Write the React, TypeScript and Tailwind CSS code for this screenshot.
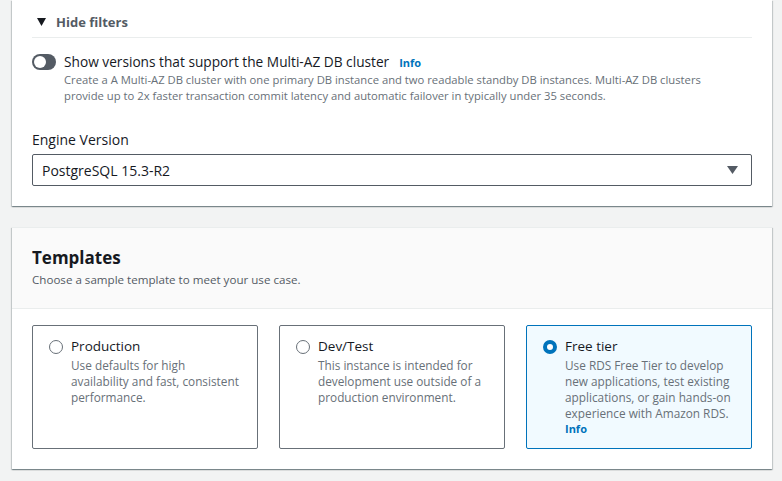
import React, { useState } from "react";

const font = { fontFamily: '"Open Sans", "Noto Sans", sans-serif' };

type Tpl = { id: string; title: string; desc: string; info?: boolean };

const templates: Tpl[] = [
  { id: "prod", title: "Production", desc: "Use defaults for high availability and fast, consistent performance." },
  { id: "dev", title: "Dev/Test", desc: "This instance is intended for development use outside of a production environment." },
  {
    id: "free",
    title: "Free tier",
    desc: "Use RDS Free Tier to develop new applications, test existing applications, or gain hands-on experience with Amazon RDS.",
    info: true,
  },
];

function Radio({ checked }: { checked: boolean }) {
  if (checked) {
    return <span className="mt-[5px] w-[14px] h-[14px] shrink-0 rounded-full border-[4px] border-[#0073bb] bg-white" />;
  }
  return <span className="mt-[5px] w-[14px] h-[14px] shrink-0 rounded-full border-[1.5px] border-[#687078] bg-white" />;
}

export default function App() {
  const [selected, setSelected] = useState("free");

  return (
    <div className="w-[782px] h-[481px] overflow-hidden bg-[#f2f3f3] text-[#16191f] pl-[12px] pr-[10px]" style={font}>
      {/* Engine options panel (top cut off) */}
      <section className="bg-white shadow-[0_1px_1px_0_rgba(0,28,36,0.3),1px_1px_1px_0_rgba(0,28,36,0.15),-1px_1px_1px_0_rgba(0,28,36,0.15)] px-[20px] pb-[20px]">
        <div className="h-[38px] flex items-start gap-[10px] border-b border-[#eaeded] pl-[5px] pt-[12px]">
          <svg width="9" height="8" viewBox="0 0 9 8" className="mt-[6px]">
            <path d="M0 0h9L4.5 8z" fill="#16191f" />
          </svg>
          <span className="text-[13px] leading-[20px] font-bold text-[#545b64]">Hide filters</span>
        </div>

        <div className="flex gap-[8px] pt-[14px]">
          <span className="mt-[2px] w-[24px] h-[16px] shrink-0 rounded-full bg-[#545b64] flex items-center px-[2px]">
            <span className="w-[12px] h-[12px] rounded-full bg-white" />
          </span>
          <div>
            <div className="text-[13.7px] leading-[19px]">
              Show versions that support the Multi-AZ DB cluster
              <span className="ml-[10px] text-[11px] font-bold text-[#0073bb]">Info</span>
            </div>
            <p className="max-w-[668px] text-[11.25px] leading-[16px] text-[#687078]">
              Create a A Multi-AZ DB cluster with one primary DB instance and two readable standby DB instances. Multi-AZ DB clusters provide up to 2x faster transaction commit latency and automatic failover in typically under 35 seconds.
            </p>
          </div>
        </div>

        <div className="mt-[25px] text-[14px] leading-[22px]">Engine Version</div>
        <div className="mt-[3px] h-[32px] border border-[#545b64] rounded-[2px] flex items-center justify-between pl-[9px] pr-[13px]">
          <span className="text-[14px]">PostgreSQL 15.3-R2</span>
          <svg width="11" height="8" viewBox="0 0 11 8">
            <path d="M0 0h11L5.5 8z" fill="#545b64" />
          </svg>
        </div>
      </section>

      {/* Templates panel */}
      <section className="mt-[21px] bg-white shadow-[0_1px_1px_0_rgba(0,28,36,0.3),1px_1px_1px_0_rgba(0,28,36,0.15),-1px_1px_1px_0_rgba(0,28,36,0.15)] border-t border-[#eaeded]">
        <header className="bg-[#fafafa] border-b border-[#eaeded] px-[20px] pt-[17px] pb-[19px]">
          <h2 className="text-[17px] font-bold leading-[26px]">Templates</h2>
          <p className="text-[11.6px] leading-[18px] text-[#545b64]">Choose a sample template to meet your use case.</p>
        </header>
        <div className="grid grid-cols-3 gap-[21px] px-[20px] pt-[16px] pb-[20px]">
          {templates.map((t) => {
            const on = selected === t.id;
            return (
              <button
                key={t.id}
                onClick={() => setSelected(t.id)}
                className={
                  "h-[124px] text-left rounded-[2px] border flex gap-[8px] pl-[16px] pr-[18px] pt-[9px] " +
                  (on ? "border-[#0073bb] bg-[#f1faff]" : "border-[#687078] bg-white")
                }
              >
                <Radio checked={on} />
                <div>
                  <div className="text-[13.5px] leading-[22px]">{t.title}</div>
                  <p className="text-[11.8px] leading-[16px] text-[#687078]">{t.desc}</p>
                  {t.info && <div className="text-[11px] leading-[16px] font-bold text-[#0073bb]">Info</div>}
                </div>
              </button>
            );
          })}
        </div>
      </section>
    </div>
  );
}
